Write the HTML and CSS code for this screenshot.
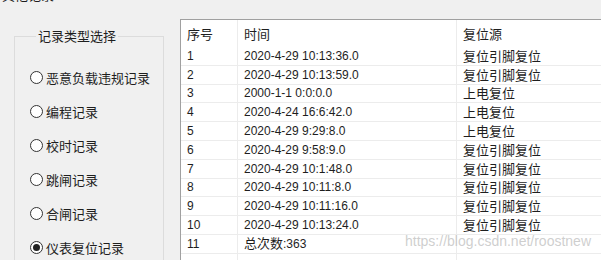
FILE: index.html
```html
<!DOCTYPE html>
<html lang="zh-CN">
<head>
	<meta charset="utf-8" />
	<title>其他记录</title>
	<link rel="stylesheet" href="styles.css">
</head>
<body>
	<div class="page">
		<div class="side">
			<div class="caption">其他记录</div>
			<fieldset class="group">
				<legend>记录类型选择</legend>
				<label class="radio"><span class="dot"></span>恶意负载违规记录</label>
				<label class="radio"><span class="dot"></span>编程记录</label>
				<label class="radio"><span class="dot"></span>校时记录</label>
				<label class="radio"><span class="dot"></span>跳闸记录</label>
				<label class="radio"><span class="dot"></span>合闸记录</label>
				<label class="radio checked"><span class="dot"></span>仪表复位记录</label>
			</fieldset>
		</div>
		<div class="list">
			<table class="grid">
				<thead>
					<tr><th class="c1">序号</th><th class="c2">时间</th><th class="c3">复位源</th></tr>
				</thead>
				<tbody>
					<tr><td>1</td><td>2020-4-29 10:13:36.0</td><td class="cn">复位引脚复位</td></tr>
					<tr><td>2</td><td>2020-4-29 10:13:59.0</td><td class="cn">复位引脚复位</td></tr>
					<tr><td>3</td><td>2000-1-1 0:0:0.0</td><td class="cn">上电复位</td></tr>
					<tr><td>4</td><td>2020-4-24 16:6:42.0</td><td class="cn">上电复位</td></tr>
					<tr><td>5</td><td>2020-4-29 9:29:8.0</td><td class="cn">上电复位</td></tr>
					<tr><td>6</td><td>2020-4-29 9:58:9.0</td><td class="cn">复位引脚复位</td></tr>
					<tr><td>7</td><td>2020-4-29 10:1:48.0</td><td class="cn">复位引脚复位</td></tr>
					<tr><td>8</td><td>2020-4-29 10:11:8.0</td><td class="cn">复位引脚复位</td></tr>
					<tr><td>9</td><td>2020-4-29 10:11:16.0</td><td class="cn">复位引脚复位</td></tr>
					<tr><td>10</td><td>2020-4-29 10:13:24.0</td><td class="cn">复位引脚复位</td></tr>
					<tr><td>11</td><td><span class="cn">总次数</span>:363</td><td></td></tr>
					<tr class="blank"><td></td><td></td><td></td></tr>
				</tbody>
			</table>
		</div>
	</div>
	<div class="watermark">https://blog.csdn.net/roostnew</div>
</body>
</html>
```

FILE: styles.css
```css
body {
	margin: 0;
	height: 260px;
	overflow: hidden;
	position: relative;
	background-color: #f0f0f0;
	color: #1e1e1e;
	font-family: "Liberation Sans", "Noto Sans CJK SC", sans-serif;
	font-size: 12px;
}
.page {
	display: flex;
	align-items: flex-start;
	height: 260px;
	overflow: hidden;
}
.side {
	width: 180px;
	flex: none;
}
.caption {
	margin: -13px 0 0 2px;
	line-height: 16px;
	font-size: 13px;
	font-family: "Noto Sans CJK SC", sans-serif;
}
.group {
	box-sizing: border-box;
	width: 150px;
	height: 240px;
	margin: 25px 0 0 14px;
	padding: 16px 0 0 15px;
	border: 1px solid #dcdcdc;
	font-family: "Noto Sans CJK SC", sans-serif;
	font-size: 13px;
}
.group > legend {
	margin-left: 6px;
	padding: 0 2px;
	line-height: 16px;
}
.radio {
	display: flex;
	align-items: center;
	gap: 3px;
	height: 34px;
}
.dot {
	box-sizing: border-box;
	width: 13px;
	height: 13px;
	border: 1px solid #333;
	border-radius: 50%;
	background-color: #fff;
	display: flex;
	align-items: center;
	justify-content: center;
}
.checked .dot::after {
	content: "";
	width: 7px;
	height: 7px;
	border-radius: 50%;
	background-color: #222;
}

/* record list */
.list {
	flex: none;
	width: 440px;
	margin-top: 19px;
	background-color: #fff;
	border-top: 1px solid #a0a0a0;
	border-left: 1px solid #a0a0a0;
	height: 260px;
}
.grid {
	border-collapse: collapse;
	table-layout: fixed;
	width: 100%;
}
.grid th {
	height: 27px;
	padding: 0 0 0 6px;
	text-align: left;
	font-weight: normal;
	font-size: 13px;
	font-family: "Noto Sans CJK SC", sans-serif;
	border-left: 1px solid #ececec;
	vertical-align: middle;
}
.grid th:first-child, .grid td:first-child {
	border-left: none;
}
.grid .c1 { width: 50px; }
.grid .c2 { width: 212px; }
.grid td {
	height: 17.8px;
	padding: 0 0 0 6px;
	border-top: 1px solid #ececec;
	border-left: 1px solid #ececec;
	white-space: nowrap;
	line-height: 16px;
	vertical-align: middle;
}
.grid tbody tr:first-child td {
	border-top: none;
}
.cn {
	font-family: "Noto Sans CJK SC", sans-serif;
	font-size: 13px;
}
.grid .blank td {
	height: 20px;
}
.watermark {
	position: absolute;
	top: 233px;
	right: 10px;
	font-size: 14px;
	color: rgba(190, 190, 190, 0.75);
}
```
